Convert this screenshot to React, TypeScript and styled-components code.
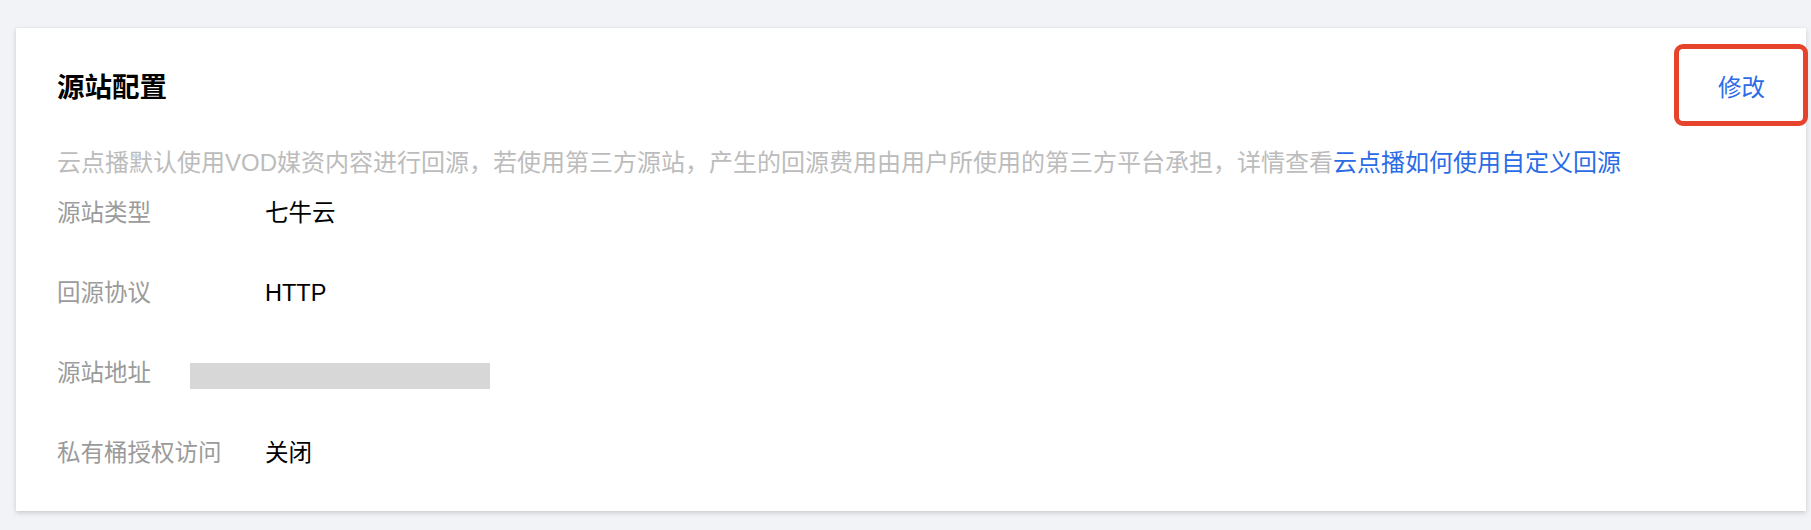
import React from 'react';
import styled, {createGlobalStyle} from 'styled-components';

const GlobalStyle = createGlobalStyle`
  html, body {
    margin: 0;
    padding: 0;
    background: #f2f3f7;
  }
  body {
    font-family: "Liberation Sans", "Noto Sans CJK SC", sans-serif;
  }
`;

type Field = {label: string; value?: string; redacted?: boolean};

const fields: Field[] = [
  {label: '源站类型', value: '七牛云'},
  {label: '回源协议', value: 'HTTP'},
  {label: '源站地址', redacted: true},
  {label: '私有桶授权访问', value: '关闭'},
];

export default function App(): JSX.Element {
  return (
    <Page>
      <GlobalStyle />
      <Card>
        <Header>
          <Title>源站配置</Title>
          <EditButton>
            修改
            <Highlight />
          </EditButton>
        </Header>
        <Notice>
          云点播默认使用VOD媒资内容进行回源，若使用第三方源站，产生的回源费用由用户所使用的第三方平台承担，详情查看
          <Link>云点播如何使用自定义回源</Link>
        </Notice>
        <FieldList>
          {fields.map(f => (
            <Row key={f.label}>
              <Label>{f.label}</Label>
              <Value>{f.value}</Value>
              {f.redacted && <Redaction />}
            </Row>
          ))}
        </FieldList>
      </Card>
    </Page>
  );
}
App.displayName = 'App';

const Page = styled.div`
  padding: 28px 5px 20px 16px;
`;

const Card = styled.section`
  background: #fff;
  padding: 40px 41px 41px 41px;
  box-shadow: 0 2px 5px rgba(0, 0, 0, 0.16), 0 0 1px rgba(0, 0, 0, 0.08);
`;

const Header = styled.div`
  display: flex;
  align-items: center;
  justify-content: space-between;
  height: 40px;
`;

const Title = styled.h2`
  margin: 0;
  font-size: 27.5px;
  line-height: 40px;
  font-weight: 700;
  color: #000;
`;

const EditButton = styled.a`
  position: relative;
  font-size: 23.5px;
  line-height: 40px;
  color: #2b6ce6;
  cursor: pointer;
`;

const Highlight = styled.span`
  position: absolute;
  left: -44px;
  right: -43px;
  top: -24px;
  bottom: -18px;
  border: 5px solid #e6432d;
  border-radius: 9px;
  pointer-events: none;
`;

const Notice = styled.p`
  margin: 38px 0 0 0;
  font-size: 24px;
  line-height: 34px;
  color: #bcbcbc;
  white-space: nowrap;
`;

const Link = styled.a`
  color: #2b6ce6;
  cursor: pointer;
`;

const FieldList = styled.div`
  display: flex;
  flex-direction: column;
  gap: 46px;
  margin-top: 16px;
`;

const Row = styled.div`
  position: relative;
  display: flex;
  align-items: center;
  height: 34px;
  font-size: 23.5px;
  line-height: 34px;
`;

const Label = styled.div`
  width: 208px;
  flex-shrink: 0;
  color: #9b9b9b;
`;

const Value = styled.div`
  color: #000;
`;

const Redaction = styled.div`
  position: absolute;
  left: 133px;
  top: 7px;
  width: 300px;
  height: 26px;
  background: #d7d7d7;
`;
